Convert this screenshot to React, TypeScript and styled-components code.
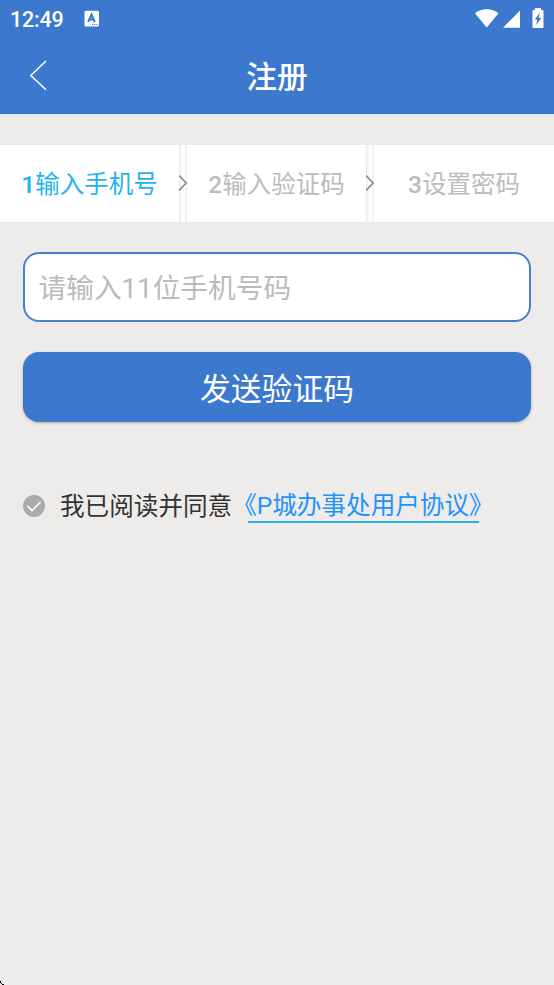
import React from "react";
import styled, { createGlobalStyle } from "styled-components";

const GlobalStyle = createGlobalStyle`
  * { box-sizing: border-box; }
  body { margin: 0; background: #edecea; font-family: Roboto, "Noto Sans CJK SC", sans-serif; }
  button, input { font-family: inherit; }
`;

const Screen = styled.main`
  position: relative;
  width: 554px;
  height: 985px;
  overflow: hidden;
  background: #edecea;
`;

const Header = styled.header`
  height: 114px;
  background: #3c78ce;
  color: #fff;
`;

const StatusBar = styled.div`
  display: flex;
  align-items: center;
  height: 38px;
  padding: 0 9px 0 10px;
`;

const Clock = styled.span`
  width: 74px;
  padding-top: 2px;
  font-size: 21.5px;
  font-weight: 500;
  line-height: 36px;
  letter-spacing: -0.2px;
`;

const StatusIcons = styled.svg`
  margin-left: auto;
`;

const TitleBar = styled.div`
  display: grid;
  grid-template-columns: 76px 1fr 76px;
  align-items: center;
  height: 76px;
`;

const BackButton = styled.button`
  display: flex;
  height: 76px;
  padding: 22px 0 0 28px;
  border: 0;
  background: none;
`;

const Title = styled.h1`
  margin: 0;
  padding-top: 4px;
  text-align: center;
  font-size: 30.8px;
  font-weight: 500;
  line-height: 72px;
`;

const Steps = styled.nav`
  display: grid;
  grid-template-columns: 179px 8px 179px 8px 180px;
  height: 77px;
  margin-top: 31px;
  margin-bottom: 30px;
  background: #fff;
  box-shadow: 0 0 1px #ddd;
`;

const Step = styled.div<{ $active?: boolean }>`
  padding-top: 4px;
  text-align: center;
  font-size: 24.5px;
  line-height: 72px;
  white-space: nowrap;
  color: ${(p) => (p.$active ? "#1eb4ee" : "#bbb")};
`;

const StepNumber = styled.span`
  font-weight: 500;
`;

const Divider = styled.div`
  display: flex;
  align-items: center;
  padding-bottom: 1px;
  background: linear-gradient(90deg, #e9e9e9, #f7f7f7 25%, #fff 55%, #f8f8f8 80%, #e9e9e9);
`;

const Form = styled.form`
  display: flex;
  flex-direction: column;
  padding: 0 23px;
`;

const PhoneInput = styled.input`
  height: 70px;
  padding: 2px 13.5px 0;
  border: 2px solid #4680d0;
  border-radius: 16px;
  background: #fff;
  font-size: 27.7px;
  outline: 0;
  &::placeholder { color: #bbb; opacity: 1; }
`;

const SendButton = styled.button`
  height: 70px;
  margin-top: 30px;
  padding: 0 0 1px;
  border: 0;
  border-radius: 16px;
  background: #3c78ce;
  box-shadow: 0 1px 3px rgba(0, 0, 0, 0.25);
  color: #fff;
  font-size: 30.8px;
`;

const Agreement = styled.div`
  display: flex;
  align-items: center;
  height: 38px;
  margin-top: 65px;
  font-size: 24.6px;
  line-height: 36px;
  color: #333;
  white-space: nowrap;
`;

const AgreementText = styled.span`
  margin-left: 15px;
  padding-top: 2px;
`;

const AgreementLink = styled.a`
  color: #2492fb;
  background: linear-gradient(#24b0e8, #24b0e8) 16px 33px / 231px 2px no-repeat;
`;

const CornerMark = styled.svg`
  position: absolute;
  left: 0;
  bottom: 0;
`;

const StepDivider = () => (
  <Divider>
    <svg width="8" height="18" viewBox="0 0 8 18">
      <path d="M0 1.5 7.2 9 0 16.5" fill="none" stroke="#888" strokeWidth="1.6" />
    </svg>
  </Divider>
);

export default function App() {
  return (
    <Screen>
      <GlobalStyle />
      <Header>
        <StatusBar>
          <Clock>12:49</Clock>
          <svg width="16" height="18" viewBox="0 0 16 18">
            <rect x=".5" y=".7" width="14.5" height="15.8" rx="1.5" fill="#fff" />
            <path d="m4.2 12 3.3-7.5 3.3 7.5M5.6 9.6h3.8" fill="none" stroke="#3c78ce" strokeWidth="2" />
            <path d="M8 14.5h1.2m1 0h1.2m1 0h1.2" stroke="#3c78ce" strokeWidth="1" />
          </svg>
          <StatusIcons width="71" height="38" viewBox="474 0 71 38">
            <path d="M475 13.2C481.5 7.8 492 7.8 498.5 13.2L486.7 27.5Z" fill="#fff" />
            <path d="M503 27.7 520 10.5v17.2Z" fill="#fff" />
            <path d="M535 8h6v2h1.5q1 0 1 1v16q0 1-1 1h-9q-1 0-1-1V11q0-1 1-1h1.5Z" fill="#fff" />
            <path d="m539.8 12.5-5 7h2.5l-1 5.5 5-7h-2.6Z" fill="#3c78ce" />
          </StatusIcons>
        </StatusBar>
        <TitleBar>
          <BackButton aria-label="返回">
            <svg width="20" height="32" viewBox="0 0 20 32">
              <path d="M18 1 2.8 15.5 18 29.8" fill="none" stroke="#fff" strokeWidth="1.5" />
            </svg>
          </BackButton>
          <Title>注册</Title>
        </TitleBar>
      </Header>
      <Steps>
        <Step $active><StepNumber>1</StepNumber>输入手机号</Step>
        <StepDivider />
        <Step><StepNumber>2</StepNumber>输入验证码</Step>
        <StepDivider />
        <Step><StepNumber>3</StepNumber>设置密码</Step>
      </Steps>
      <Form>
        <PhoneInput placeholder="请输入11位手机号码" />
        <SendButton type="button">发送验证码</SendButton>
        <Agreement>
          <svg width="22" height="22" viewBox="0 0 22 22">
            <circle cx="11" cy="11" r="11" fill="#aaa" />
            <path d="m4.5 11 4.6 4.6 8.6-8.8" fill="none" stroke="#fff" strokeWidth="1.6" />
          </svg>
          <AgreementText>我已阅读并同意</AgreementText>
          <AgreementLink>《P城办事处用户协议》</AgreementLink>
        </Agreement>
      </Form>
      <CornerMark width="4" height="4" viewBox="0 0 4 4" shapeRendering="crispEdges">
        <path d="M0 0h1v2H0zM1 2h1v1H1zM2 3h2v1H2z" fill="#000" />
      </CornerMark>
    </Screen>
  );
}
